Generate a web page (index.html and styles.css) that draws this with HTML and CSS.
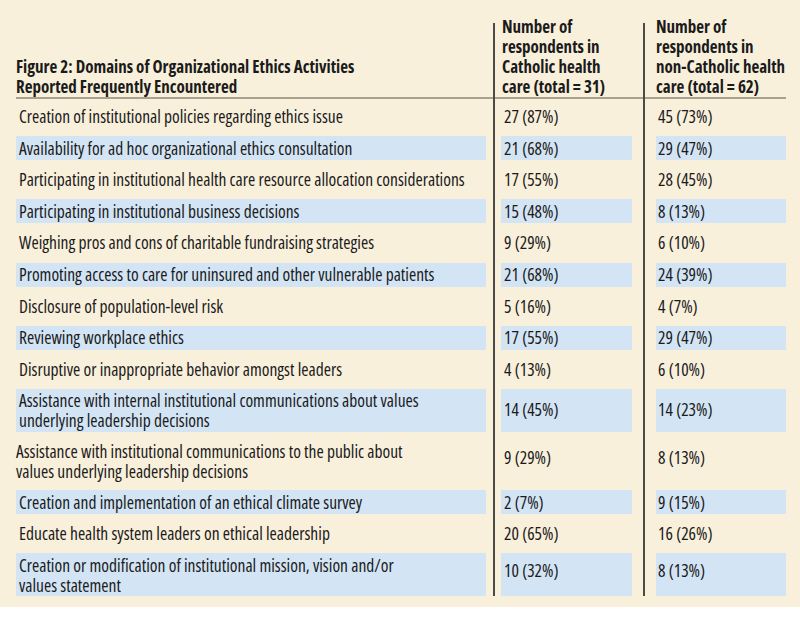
FILE: index.html
```html
<!DOCTYPE html>
<html>
<head>
<meta charset="utf-8">
<link rel="stylesheet" href="styles.css">
</head>
<body>
<div class="panel">
  <div class="grid">
    <div class="hd title">Figure 2: Domains of Organizational Ethics Activities<br>Reported Frequently Encountered</div>
    <div class="hd c2">Number of<br>respondents in<br>Catholic health<br>care (total = 31)</div>
    <div class="hd c3">Number of<br>respondents in<br>non-Catholic health<br>care (total = 62)</div>
    <div class="rule"></div>

    <div class="cell c1">Creation of institutional policies regarding ethics issue</div>
    <div class="cell c2">27 (87%)</div>
    <div class="cell c3">45 (73%)</div>

    <div class="cell c1 alt">Availability for ad hoc organizational ethics consultation</div>
    <div class="cell c2 alt">21 (68%)</div>
    <div class="cell c3 alt">29 (47%)</div>

    <div class="cell c1">Participating in institutional health care resource allocation considerations</div>
    <div class="cell c2">17 (55%)</div>
    <div class="cell c3">28 (45%)</div>

    <div class="cell c1 alt">Participating in institutional business decisions</div>
    <div class="cell c2 alt">15 (48%)</div>
    <div class="cell c3 alt">8 (13%)</div>

    <div class="cell c1">Weighing pros and cons of charitable fundraising strategies</div>
    <div class="cell c2">9 (29%)</div>
    <div class="cell c3">6 (10%)</div>

    <div class="cell c1 alt">Promoting access to care for uninsured and other vulnerable patients</div>
    <div class="cell c2 alt">21 (68%)</div>
    <div class="cell c3 alt">24 (39%)</div>

    <div class="cell c1">Disclosure of population-level risk</div>
    <div class="cell c2">5 (16%)</div>
    <div class="cell c3">4 (7%)</div>

    <div class="cell c1 alt">Reviewing workplace ethics</div>
    <div class="cell c2 alt">17 (55%)</div>
    <div class="cell c3 alt">29 (47%)</div>

    <div class="cell c1">Disruptive or inappropriate behavior amongst leaders</div>
    <div class="cell c2">4 (13%)</div>
    <div class="cell c3">6 (10%)</div>

    <div class="cell c1 alt two">Assistance with internal institutional communications about values<br>underlying leadership decisions</div>
    <div class="cell c2 alt val2">14 (45%)</div>
    <div class="cell c3 alt val2">14 (23%)</div>

    <div class="cell c1 flush two">Assistance with institutional communications to the public about<br>values underlying leadership decisions</div>
    <div class="cell c2 val2 upper">9 (29%)</div>
    <div class="cell c3 val2 upper">8 (13%)</div>

    <div class="cell c1 alt">Creation and implementation of an ethical climate survey</div>
    <div class="cell c2 alt">2 (7%)</div>
    <div class="cell c3 alt">9 (15%)</div>

    <div class="cell c1">Educate health system leaders on ethical leadership</div>
    <div class="cell c2">20 (65%)</div>
    <div class="cell c3">16 (26%)</div>

    <div class="cell c1 alt two">Creation or modification of institutional mission, vision and/or<br>values statement</div>
    <div class="cell c2 alt val2 upper">10 (32%)</div>
    <div class="cell c3 alt val2 upper">8 (13%)</div>

    <div class="vline v1"></div>
    <div class="vline v2"></div>
  </div>
</div>
</body>
</html>
```
FILE: styles.css
```css
html, body {
  margin: 0;
  padding: 0;
  background: #ffffff;
}

.panel {
  background: #f9f0dc;
  height: 607px;
  box-sizing: border-box;
  padding: 17px 14px 0 16px;
  font-family: "Open Sans", "Roboto Condensed", sans-serif;
  font-stretch: 75%;
  color: #1b1b1b;
}

.grid {
  display: grid;
  grid-template-columns: 470px 15px 131px 24px 130px;
}

.hd {
  font-weight: 700;
  font-size: 17px;
  line-height: 20px;
  align-self: end;
  grid-row: 1;
  white-space: nowrap;
}

.hd.title {
  grid-column: 1;
}

.hd.c2 {
  grid-column: 3;
  padding-left: 1px;
}

.hd.c3 {
  grid-column: 5;
}

.rule {
  grid-column: 1 / -1;
  grid-row: 2;
  height: 1.5px;
  margin-bottom: -1.5px;
  background: #aaa18f;
}

.cell {
  font-size: 17.5px;
  line-height: 19px;
  padding: 2.5px 3px;
  margin-top: 7.6px;
  white-space: nowrap;
}

.cell.two {
  line-height: 20px;
  padding-top: 1.5px;
  padding-bottom: 1.5px;
}

.cell.c1 { grid-column: 1; }
.cell.c2 { grid-column: 3; }
.cell.c3 { grid-column: 5; padding-left: 2px; }

.cell.flush { padding-left: 0; }

.alt {
  background: #d3e5f5;
}

.val2 {
  padding-top: 11px;
}

.val2.upper {
  padding-top: 8px;
}

.vline {
  grid-row: 1 / 17;
  width: 2px;
  background: #4d4a45;
  justify-self: center;
  margin-top: 6px;
}

.v1 { grid-column: 2; }
.v2 { grid-column: 4; }
```
